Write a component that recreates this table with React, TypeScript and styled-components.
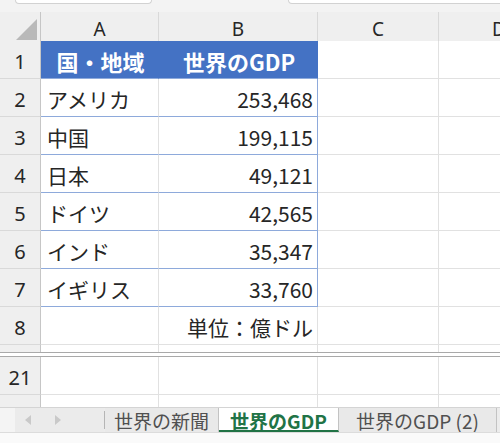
import React from 'react';
import styled, { createGlobalStyle } from 'styled-components';

const GlobalStyle = createGlobalStyle`
  html, body { margin: 0; padding: 0; background: #fff; overflow: hidden; }
  body {
    width: 500px;
    height: 443px;
    font-family: "Noto Sans CJK JP", "Noto Sans", sans-serif;
  }
`;

const COLS = '41px 118px 159px 121px 121px';
const GRID = '#e1e1e1';
const HEAD_BG = '#efefef';
const BLUE = '#4472c4';
const BLUE_LINE = '#8eaadb';

const Frame = styled.div`
  width: 500px;
  height: 443px;
  overflow: hidden;
  display: flex;
  flex-direction: column;
  background: #fff;
`;

const TopStrip = styled.div`
  flex: none;
  height: 12px;
  background: #f3f3f3;
  display: flex;
  align-items: flex-start;
  padding-left: 15px;
  gap: 136px;
  box-sizing: border-box;
`;

const FieldEdge = styled.div<{ $w: number }>`
  flex: none;
  width: ${p => p.$w}px;
  height: 4px;
  background: #fff;
  border: 1px solid #d2d2d2;
  border-top: none;
  border-radius: 0 0 6px 6px;
  box-sizing: border-box;
`;

const Row = styled.div<{ $h: number }>`
  flex: none;
  display: grid;
  grid-template-columns: ${COLS};
  height: ${p => p.$h}px;
`;

const ColHead = styled.div<{ $corner?: boolean }>`
  background: ${HEAD_BG};
  border-right: 1px solid ${p => (p.$corner ? '#c6c6c6' : '#d9d9d9')};
  border-bottom: 1px solid #c6c6c6;
  box-sizing: border-box;
  display: flex;
  align-items: center;
  justify-content: center;
  padding-top: 3px;
  font-family: "Noto Sans", "Noto Sans CJK JP", sans-serif;
  font-size: 19px;
  color: #262626;
  line-height: 1;
  white-space: nowrap;
`;

const RowHead = styled.div<{ $cut?: boolean }>`
  background: ${HEAD_BG};
  border-right: 1px solid #c6c6c6;
  border-bottom: ${p => (p.$cut ? 'none' : '1px solid #d9d9d9')};
  box-sizing: border-box;
  display: flex;
  align-items: center;
  justify-content: center;
  padding-top: 4px;
  font-family: "Noto Sans", "Noto Sans CJK JP", sans-serif;
  font-size: 20px;
  color: #262626;
  line-height: 1;
`;

type Kind = 'plain' | 'head' | 'text' | 'num';

const Cell = styled.div<{ $kind?: Kind; $bottom?: string; $right?: string; $cut?: boolean }>`
  box-sizing: border-box;
  border-right: 1px solid ${p => p.$right ?? GRID};
  border-bottom: ${p => (p.$cut ? 'none' : `1px solid ${p.$bottom ?? GRID}`)};
  background: ${p => (p.$kind === 'head' ? BLUE : '#fff')};
  color: ${p => (p.$kind === 'head' ? '#fff' : '#262626')};
  font-weight: ${p => (p.$kind === 'head' ? 700 : 400)};
  display: flex;
  align-items: center;
  justify-content: ${p =>
    p.$kind === 'head' ? 'center' : p.$kind === 'num' ? 'flex-end' : 'flex-start'};
  padding: 3px 4px 0 6px;
  font-size: ${p => (p.$kind === 'head' ? 22 : 21)}px;
  line-height: 1;
  white-space: nowrap;
  overflow: hidden;
`;

const Split = styled.div`
  flex: none;
  height: 5px;
  box-sizing: border-box;
  border-top: 1px solid #a9a9a9;
  border-bottom: 1px solid #a9a9a9;
  background: #fff;
`;

const TabBar = styled.div`
  flex: none;
  height: 25px;
  display: flex;
  align-items: stretch;
  background: #ececec;
  border-top: 1px solid #d4d4d4;
  box-sizing: border-box;
`;

const Nav = styled.div`
  flex: none;
  width: 104px;
  display: flex;
  align-items: center;
  padding-left: 25px;
  gap: 24px;
  box-sizing: border-box;
  background: linear-gradient(to right, #f4f4f4 0 15px, #ebebeb 15px);
`;

const Divider = styled.div`
  flex: none;
  width: 1px;
  margin: 3px 0 3px;
  background: #b5b5b5;
`;

const Tab = styled.div<{ $active?: boolean; $w: number }>`
  flex: none;
  width: ${p => p.$w}px;
  box-sizing: border-box;
  display: flex;
  align-items: center;
  justify-content: center;
  font-size: 19px;
  line-height: 1;
  padding-top: ${p => (p.$active ? '2px' : '1px')};
  color: ${p => (p.$active ? '#217346' : '#505050')};
  font-weight: ${p => (p.$active ? 700 : 400)};
  background: ${p => (p.$active ? '#fff' : '#e9e9e9')};
  border-right: 1px solid #c3c3c3;
  border-bottom: ${p => (p.$active ? '2px solid #217346' : 'none')};
  white-space: nowrap;
`;

const Bottom = styled.div`
  flex: 1;
  background: #fafafa;
  border-top: 1px solid #dcdcdc;
`;

const Corner = () => (
  <svg width="40" height="28" viewBox="0 0 40 28">
    <polygon points="16,25 37,25 37,4" fill="#b9b9b9" />
  </svg>
);

const Arrow = ({ dir }: { dir: 'l' | 'r' }) => (
  <svg width="6" height="10" viewBox="0 0 6 10">
    <polygon points={dir === 'l' ? '6,0 0,5 6,10' : '0,0 6,5 0,10'} fill="#c9c9c9" />
  </svg>
);

const data: [string, string][] = [
  ['アメリカ', '253,468'],
  ['中国', '199,115'],
  ['日本', '49,121'],
  ['ドイツ', '42,565'],
  ['インド', '35,347'],
  ['イギリス', '33,760'],
];

export default function App() {
  return (
    <Frame>
      <GlobalStyle />
      <TopStrip>
        <FieldEdge $w={137} />
        <FieldEdge $w={240} />
      </TopStrip>

      <Row $h={29}>
        <ColHead $corner>
          <Corner />
        </ColHead>
        <ColHead>A</ColHead>
        <ColHead>B</ColHead>
        <ColHead>C</ColHead>
        <ColHead>D</ColHead>
      </Row>

      <Row $h={38}>
        <RowHead>1</RowHead>
        <Cell $kind="head" $right={BLUE} $bottom={BLUE_LINE}>国・地域</Cell>
        <Cell $kind="head" $right={BLUE} $bottom={BLUE_LINE}>世界のGDP</Cell>
        <Cell />
        <Cell />
      </Row>

      {data.map(([name, gdp], i) => (
        <Row $h={38} key={name}>
          <RowHead>{i + 2}</RowHead>
          <Cell $kind="text" $bottom={BLUE_LINE}>{name}</Cell>
          <Cell $kind="num" $bottom={BLUE_LINE} $right={BLUE_LINE}>{gdp}</Cell>
          <Cell />
          <Cell />
        </Row>
      ))}

      <Row $h={38}>
        <RowHead>8</RowHead>
        <Cell />
        <Cell $kind="num">単位：億ドル</Cell>
        <Cell />
        <Cell />
      </Row>

      <Row $h={7}>
        <RowHead $cut />
        <Cell $cut />
        <Cell $cut />
        <Cell $cut />
        <Cell $cut />
      </Row>

      <Split />

      <Row $h={38}>
        <RowHead>21</RowHead>
        <Cell />
        <Cell />
        <Cell />
        <Cell />
      </Row>

      <Row $h={12}>
        <RowHead $cut />
        <Cell $cut />
        <Cell $cut />
        <Cell $cut />
        <Cell $cut />
      </Row>

      <TabBar>
        <Nav>
          <Arrow dir="l" />
          <Arrow dir="r" />
        </Nav>
        <Divider />
        <Tab $w={114}>世界の新聞</Tab>
        <Tab $w={120} $active>世界のGDP</Tab>
        <Tab $w={158}>世界のGDP (2)</Tab>
      </TabBar>
      <Bottom />
    </Frame>
  );
}
